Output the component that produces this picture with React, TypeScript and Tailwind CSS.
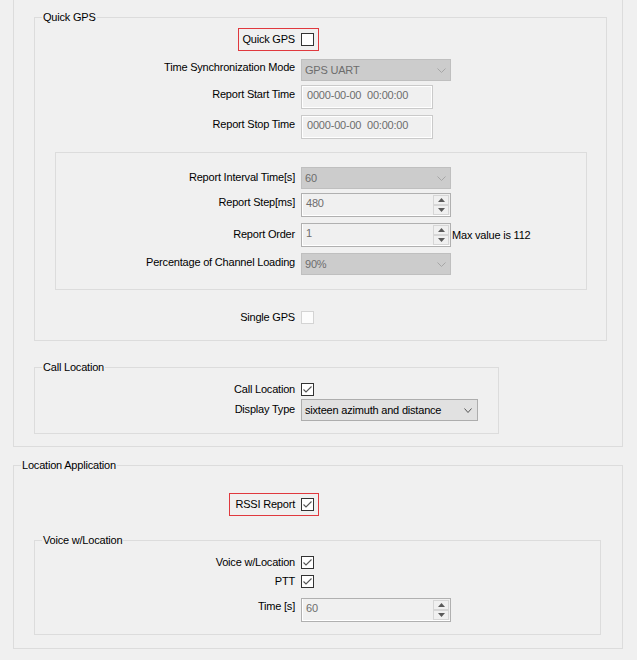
import React from "react";

function GroupBox({
  label,
  className,
  children,
}: {
  label: string;
  className: string;
  children?: React.ReactNode;
}) {
  return (
    <div className={`relative border border-[#dcdcdc] ${className}`}>
      <span className="absolute left-[7px] top-[-7px] bg-[#f0f0f0] px-[1px] leading-[13px] whitespace-nowrap">
        {label}
      </span>
      {children}
    </div>
  );
}

function Chevron({ color, w = 9, h = 5 }: { color: string; w?: number; h?: number }) {
  return (
    <svg width={w} height={h} viewBox={`0 0 ${w} ${h}`} className="block">
      <polyline
        points={`0.5,0.5 ${w / 2},${h - 0.5} ${w - 0.5},0.5`}
        fill="none"
        stroke={color}
        strokeWidth="1"
      />
    </svg>
  );
}

function CheckBox({ checked, disabled }: { checked?: boolean; disabled?: boolean }) {
  return (
    <div
      className={
        disabled
          ? "w-[13px] h-[13px] border border-[#d4d4d4] bg-[#fcfcfc] shrink-0"
          : "w-[13px] h-[13px] border border-[#333333] bg-white shrink-0 flex items-center justify-center"
      }
    >
      {checked && (
        <svg width="11" height="11" viewBox="0 0 11 11" className="block">
          <polyline points="1.5,5.5 4,8 9.5,2.5" fill="none" stroke="#555555" strokeWidth="1.1" />
        </svg>
      )}
    </div>
  );
}

function DisabledCombo({ value }: { value: string }) {
  return (
    <div className="w-[150px] h-[22px] bg-[#cccccc] border border-[#bfbfbf] flex items-center justify-between pl-[3px] pr-[4px] text-[#6d6d6d]">
      <span>{value}</span>
      <Chevron color="#a6a6a6" />
    </div>
  );
}

function TextBox({ value }: { value: string }) {
  return (
    <div className="w-[132px] h-[24px] bg-[#f0f0f0] border border-[#cacaca] shadow-[inset_0_0_0_1px_#ffffff] flex items-center pl-[5px] pb-[3px] text-[#6d6d6d] whitespace-pre">
      {value}
    </div>
  );
}

function SpinArrow({ up }: { up?: boolean }) {
  return (
    <svg width="7" height="4" viewBox="0 0 7 4" className="block">
      <polygon points={up ? "3.5,0 7,4 0,4" : "0,0 7,0 3.5,4"} fill="#5a5a5a" />
    </svg>
  );
}

function Spin({ value }: { value: string }) {
  return (
    <div className="w-[150px] h-[24px] bg-[#f0f0f0] border border-[#b0b0b0] shadow-[inset_1px_-1px_0_#ffffff] flex items-stretch">
      <div className="flex-1 flex items-center pl-[4px] pb-[3px] text-[#6d6d6d]">{value}</div>
      <div className="w-[17px] flex flex-col py-[1px] pr-[1px]">
        <div className="flex-1 border border-[#d6d6d6] bg-[#f0f0f0] flex items-center justify-center">
          <SpinArrow up />
        </div>
        <div className="flex-1 border border-[#d6d6d6] bg-[#f0f0f0] flex items-center justify-center">
          <SpinArrow />
        </div>
      </div>
    </div>
  );
}

export default function App() {
  return (
    <div className="w-[637px] h-[660px] bg-[#f0f0f0] overflow-hidden text-[11px] leading-[13px] tracking-[-0.2px] text-black font-['Liberation_Sans',Arial,sans-serif]">
      {/* Outer upper group (top cut off) */}
      <div className="ml-[13px] w-[610px] h-[447px] border-x border-b border-[#dcdcdc] pt-[17px]">
        <GroupBox label="Quick GPS" className="ml-[20px] w-[573px] h-[324px]">
          <div className="mt-[10px] ml-[203px] w-[81px] h-[23px] border border-[#e0393e] flex items-center justify-end gap-[6px] pr-[4px]">
            <span>Quick GPS</span>
            <CheckBox />
          </div>

          <div className="mt-[8px] flex items-start gap-[6px]">
            <div className="w-[260px] text-right pt-[2px]">Time Synchronization Mode</div>
            <DisabledCombo value="GPS UART" />
          </div>
          <div className="mt-[4px] flex items-start gap-[6px]">
            <div className="w-[260px] text-right pt-[3px]">Report Start Time</div>
            <TextBox value="0000-00-00  00:00:00" />
          </div>
          <div className="mt-[6px] flex items-start gap-[6px]">
            <div className="w-[260px] text-right pt-[3px]">Report Stop Time</div>
            <TextBox value="0000-00-00  00:00:00" />
          </div>

          <div className="mt-[13px] ml-[20px] w-[532px] h-[138px] border border-[#dcdcdc]">
            <div className="mt-[14px] flex items-start gap-[6px]">
              <div className="w-[239px] text-right pt-[4px]">Report Interval Time[s]</div>
              <DisabledCombo value="60" />
            </div>
            <div className="mt-[4px] flex items-start gap-[6px]">
              <div className="w-[239px] text-right pt-[3px]">Report Step[ms]</div>
              <Spin value="480" />
            </div>
            <div className="mt-[6px] flex items-start gap-[6px]">
              <div className="w-[239px] text-right pt-[5px]">Report Order</div>
              <div className="flex items-center">
                <Spin value="1" />
                <span className="ml-[1px]">Max value is 112</span>
              </div>
            </div>
            <div className="mt-[6px] flex items-start gap-[6px]">
              <div className="w-[239px] text-right pt-[3px]">Percentage of Channel Loading</div>
              <DisabledCombo value="90%" />
            </div>
          </div>

          <div className="mt-[21px] flex items-center gap-[6px]">
            <div className="w-[260px] text-right">Single GPS</div>
            <CheckBox disabled />
          </div>
        </GroupBox>

        <GroupBox label="Call Location" className="mt-[26px] ml-[20px] w-[465px] h-[67px]">
          <div className="mt-[15px] flex items-center gap-[6px] h-[13px]">
            <div className="w-[260px] text-right">Call Location</div>
            <CheckBox checked />
          </div>
          <div className="mt-[3px] flex items-start gap-[6px]">
            <div className="w-[260px] text-right pt-[4px]">Display Type</div>
            <div className="w-[177px] h-[22px] bg-[#e1e1e1] border border-[#adadad] flex items-center justify-between pl-[3px] pr-[5px]">
              <span>sixteen azimuth and distance</span>
              <Chevron color="#555555" w={8} h={5} />
            </div>
          </div>
        </GroupBox>
      </div>

      <GroupBox label="Location Application" className="mt-[18px] ml-[13px] w-[610px] h-[184px]">
        <div className="mt-[27px] ml-[215px] w-[90px] h-[23px] border border-[#e0393e] flex items-center justify-end gap-[6px] pr-[4px]">
          <span>RSSI Report</span>
          <CheckBox checked />
        </div>

        <GroupBox label="Voice w/Location" className="mt-[24px] ml-[20px] w-[567px] h-[95px]">
          <div className="mt-[15px] flex items-center gap-[6px] h-[13px]">
            <div className="w-[260px] text-right">Voice w/Location</div>
            <CheckBox checked />
          </div>
          <div className="mt-[6px] flex items-center gap-[6px] h-[13px]">
            <div className="w-[260px] text-right">PTT</div>
            <CheckBox checked />
          </div>
          <div className="mt-[10px] flex items-start gap-[6px]">
            <div className="w-[260px] text-right pt-[2px]">Time [s]</div>
            <Spin value="60" />
          </div>
        </GroupBox>
      </GroupBox>
    </div>
  );
}
